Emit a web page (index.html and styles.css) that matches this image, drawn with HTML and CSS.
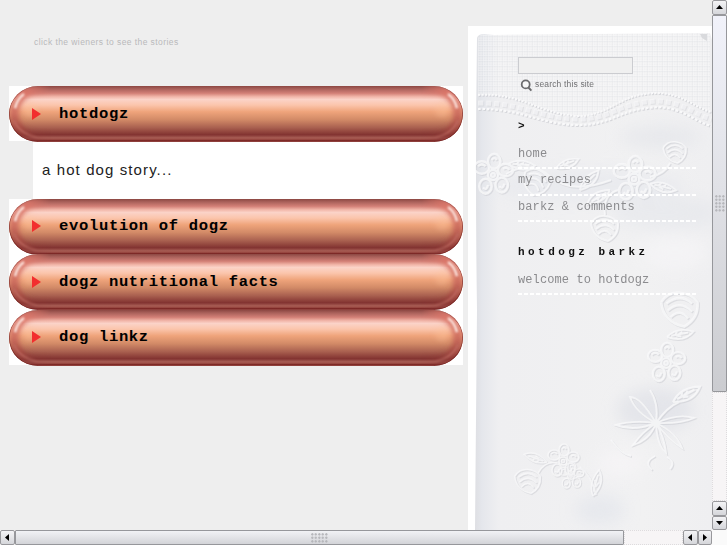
FILE: index.html
```html
<!DOCTYPE html>
<html>
<head>
    <meta charset="utf-8">
    <title>hotdogz</title>
    <link rel="stylesheet" href="styles.css">
</head>
<body>
    <!-- shared sausage artwork -->
    <svg class="defs" width="0" height="0">
        <defs>
            <linearGradient id="skin" x1="0" y1="0" x2="0" y2="1">
                <stop offset="0" stop-color="#8c4742"/>
                <stop offset=".05" stop-color="#a9605a"/>
                <stop offset=".13" stop-color="#d38077"/>
                <stop offset=".19" stop-color="#f1b5a8"/>
                <stop offset=".24" stop-color="#fbd3c8"/>
                <stop offset=".34" stop-color="#fbc5ac"/>
                <stop offset=".46" stop-color="#efa47b"/>
                <stop offset=".6" stop-color="#d28a67"/>
                <stop offset=".74" stop-color="#aa6150"/>
                <stop offset=".87" stop-color="#823331"/>
                <stop offset=".92" stop-color="#a35850"/>
                <stop offset=".95" stop-color="#a2534b"/>
                <stop offset=".97" stop-color="#7a2523"/>
                <stop offset="1" stop-color="#984b46"/>
            </linearGradient>
            <linearGradient id="rim" x1="0" y1="0" x2="0" y2="1">
                <stop offset="0" stop-color="#dc7669"/>
                <stop offset=".45" stop-color="#d27263"/>
                <stop offset=".75" stop-color="#a94d44"/>
                <stop offset="1" stop-color="#843230"/>
            </linearGradient>
            <linearGradient id="edge" x1="0" y1="0" x2="0" y2="1">
                <stop offset="0" stop-color="#b9685f"/>
                <stop offset="1" stop-color="#701b19"/>
            </linearGradient>
            <linearGradient id="fade" gradientUnits="userSpaceOnUse" x1="14" y1="0" x2="42" y2="0">
                <stop offset="0" stop-color="#fff"/>
                <stop offset="1" stop-color="#000"/>
            </linearGradient>
            <mask id="capmask" maskUnits="userSpaceOnUse" x="-2" y="-2" width="52" height="60">
                <rect x="-2" y="-2" width="52" height="60" fill="url(#fade)"/>
            </mask>
            <clipPath id="body"><rect width="454" height="55.4" rx="29" ry="27.7"/></clipPath>
            <filter id="soft" filterUnits="userSpaceOnUse" x="-20" y="-20" width="100" height="96"><feGaussianBlur stdDeviation="2.4"/></filter>
            <filter id="fine" filterUnits="userSpaceOnUse" x="-20" y="-20" width="100" height="96"><feGaussianBlur stdDeviation=".9"/></filter>
            <g id="cap">
                <g mask="url(#capmask)">
                    <path d="M60 3H32C16 3 5 14 5 28S16 51 32 52H60" fill="none" stroke="url(#rim)" stroke-width="9.5" filter="url(#soft)"/>
                    <ellipse cx="22" cy="24" rx="7" ry="7" fill="#ffc49d" opacity=".45" filter="url(#soft)"/>
                    <path d="M6 22Q8 13 15 8" fill="none" stroke="#ffece6" stroke-width="2.4" filter="url(#fine)"/>
                    <path d="M5 34Q10 47 28 51L44 51.4" fill="none" stroke="#c27268" stroke-width="1.4" filter="url(#fine)"/>
                    <path d="M29 .3A28.7 27.4 0 0 0 29 55.1" fill="none" stroke="url(#edge)" stroke-width="1.1"/>
                </g>
            </g>
            <symbol id="wiener" viewBox="0 0 454 55.4" preserveAspectRatio="none">
                <g clip-path="url(#body)">
                    <rect width="454" height="55.4" fill="url(#skin)"/>
                    <use href="#cap"/>
                    <use href="#cap" transform="translate(454 0) scale(-1 1)"/>
                </g>
            </symbol>
        </defs>
    </svg>

    <div class="window">
        <div class="page">
            <div class="main">
                <p class="hint">click the wieners to see the stories</p>
                <div class="wiener">
                    <svg class="wiener-bg"><use href="#wiener"/></svg>
                    <span class="arrow"></span><h2>hotdogz</h2>
                </div>
                <div class="story">a hot dog story...</div>
                <div class="wiener">
                    <svg class="wiener-bg"><use href="#wiener"/></svg>
                    <span class="arrow"></span><h2>evolution of dogz</h2>
                </div>
                <div class="wiener">
                    <svg class="wiener-bg"><use href="#wiener"/></svg>
                    <span class="arrow"></span><h2>dogz nutritional facts</h2>
                </div>
                <div class="wiener">
                    <svg class="wiener-bg"><use href="#wiener"/></svg>
                    <span class="arrow"></span><h2>dog linkz</h2>
                </div>
            </div>

            <div class="sidebar">
                <svg class="cloth" viewBox="468 26 244 504" preserveAspectRatio="none">
                    <defs>
                        <linearGradient id="fold" x1="0" x2="1">
                            <stop offset="0" stop-color="#dedfe3"/>
                            <stop offset=".03" stop-color="#e5e7ec"/>
                            <stop offset=".1" stop-color="#efeff1"/>
                            <stop offset=".7" stop-color="#f1f1f2"/>
                            <stop offset="1" stop-color="#efeff1"/>
                        </linearGradient>
                        <clipPath id="sheet"><path d="M476 30H712V530H475z"/></clipPath>
                        <pattern id="linen" width="5" height="5" patternUnits="userSpaceOnUse">
                            <path d="M0 .5H5M0 3H5M1 0V5M3.5 0V5" stroke="#fff" stroke-width=".8" opacity=".4"/>
                            <path d="M0 1.7H5M2.3 0V5" stroke="#dcdde2" stroke-width=".6" opacity=".5"/>
                        </pattern>
                        <filter id="haze" x="-50%" y="-50%" width="200%" height="200%"><feGaussianBlur stdDeviation="8"/></filter>
                        <filter id="stitch" x="-10%" y="-10%" width="120%" height="120%">
                            <feGaussianBlur stdDeviation=".4"/>
                            <feDropShadow dx="1" dy="1" stdDeviation=".7" flood-color="#c4c6cc" flood-opacity=".6"/>
                        </filter>
                        <g id="bloom">
                            <circle r="4"/><circle r="1.5"/>
                            <ellipse cx="-9" cy="-6" rx="6" ry="5"/><ellipse cx="1" cy="-11" rx="5" ry="6"/>
                            <ellipse cx="10" cy="-4" rx="6" ry="5"/><ellipse cx="7" cy="8" rx="5" ry="6"/>
                            <ellipse cx="-6" cy="9" rx="5" ry="6"/>
                            <path d="M-12-7q3-3 6 0M-1-12q2-3 4 0M8-5q3-2 5 1M5 9q3 3 4-2M-8 10q3 3 4-2"/>
                        </g>
                        <g id="leaf"><path d="M0 0Q8-12 25-10Q18 3 0 0M4-2L20-8M8-4l1-4M12-5l2-3M9-3l5 0"/></g>
                        <g id="bud"><path d="M-14-5Q-9-13 0-12T13-5Q14 7 3 13Q-12 10-14-5M-10-4Q0-12 9-4M-9 1Q0-7 9 2M-7 6Q0-1 6 7"/></g>
                    </defs>
                    <path d="M477 38Q478 34 484 34L494 35L710 33L712 40V530H475L477 310Q475 170 477 38" fill="url(#fold)"/>
                    <path d="M478 38Q480 34 486 35L710 33V112Q675 91 650 93C620 94 607 114 577 117C538 120 526 96 478 95Z" fill="url(#linen)"/>
                    <path d="M700 34h7v7l-5-3z" fill="#d9dadd"/>
                    <g filter="url(#haze)" opacity=".6">
                        <ellipse cx="660" cy="137" rx="40" ry="12" fill="#e2e4e9"/>
                        <ellipse cx="590" cy="186" rx="95" ry="16" fill="#e5e7ed"/>
                        <ellipse cx="667" cy="213" rx="55" ry="17" fill="#e4e6eb"/>
                        <ellipse cx="675" cy="252" rx="33" ry="18" fill="#f7f6f8"/>
                        <ellipse cx="655" cy="410" rx="38" ry="22" fill="#dcdee5"/>
                        <ellipse cx="620" cy="463" rx="24" ry="14" fill="#f8f6f8"/>
                        <ellipse cx="600" cy="510" rx="25" ry="15" fill="#e1e4eb"/>
                    </g>
                    <g clip-path="url(#sheet)">
                    <g fill="none" stroke="#f9f9fa" filter="url(#stitch)">
                        <g>
                            <path d="M478 95C520 92 537 113 577 116C612 116 618 92 660 93C684 95 694 107 711 112" stroke-width="2" stroke-dasharray="2 1.4"/>
                            <path d="M478 103C520 102 539 118 577 119C614 119 618 101 660 101C684 103 694 114 711 119" stroke-width="5" stroke-dasharray="5 3" opacity=".6"/>
                            <path d="M478 109C520 108 539 124 577 125C614 125 618 108 660 107C684 109 694 121 711 126" stroke-width="2.2" stroke-dasharray="2.5 1.8"/>
                        </g>
                        <g stroke-width="1.9" opacity=".8">
                            <use href="#bloom" transform="translate(493 175) scale(1.25)"/>
                            <use href="#bud" transform="translate(536 182) rotate(25)"/>
                            <use href="#leaf" transform="translate(556 168) scale(.9)"/>
                            <use href="#leaf" transform="translate(508 164) rotate(25)"/>
                            <use href="#leaf" transform="translate(580 190) rotate(-25)"/>
                            <use href="#bloom" transform="translate(634 179) scale(1.35)"/>
                            <use href="#leaf" transform="translate(650 184) rotate(35)"/>
                            <use href="#leaf" transform="translate(610 190) rotate(170)"/>
                            <use href="#bud" transform="translate(605 228)"/>
                            <use href="#bud" transform="translate(675 152) scale(.85)"/>
                            <path d="M506 174q25-15 45 3t60 3M605 215q-3-20 13-25M650 177q15-3 20-14"/>
                            <use href="#bud" transform="translate(680 309) scale(1.35)"/>
                            <use href="#leaf" transform="translate(667 337) rotate(10)"/>
                            <use href="#bloom" transform="translate(666 363) scale(1.2)"/>
                            <use href="#leaf" transform="translate(673 402) rotate(-8) scale(1.15)"/>
                            <path d="M656 423Q641 397 630 397Q636 413 656 423Q632 420 616 425Q634 432 656 423Q642 432 633 445Q650 440 656 423Q657 445 666 453Q664 436 656 423Q669 440 682 448Q677 433 656 423Q681 424 694 418Q678 413 656 423Q667 407 679 402M656 423Q659 403 650 390"/>
                            <path d="M611 440q11 15 20 16M655 456q-12 6-3 14M667 457q9 5 3 12"/>
                        </g>
                        <g stroke-width="1.6" opacity=".75">
                            <use href="#bloom" transform="translate(563 461)"/>
                            <use href="#bloom" transform="translate(571 476) scale(.8)"/>
                            <use href="#leaf" transform="translate(547 462) rotate(220) scale(.9)"/>
                            <use href="#bud" transform="translate(528 481) scale(.95)"/>
                            <use href="#leaf" transform="translate(593 496) rotate(-55)"/>
                            <path d="M538 473q7-13 19-10M580 467q12 9 16 28"/>
                        </g>
                    </g>
                    </g>
                </svg>
                <div class="sidebar-content">
                    <input class="search-field" type="text">
                    <div class="search-row">
                        <svg width="13" height="13" viewBox="0 0 13 13"><circle cx="5.7" cy="5.4" r="4" fill="#f8f8f8" stroke="#6c6c6e" stroke-width="1.8"/><path d="M8.2 8.2L11.4 11.6" stroke="#6c6c6e" stroke-width="2"/></svg>
                        <span>search this site</span>
                    </div>
                    <h3 class="more">&gt;</h3>
                    <ul>
                        <li>home</li>
                        <li>my recipes</li>
                        <li>barkz &amp; comments</li>
                    </ul>
                    <h3 class="barkz">hotdogz barkz</h3>
                    <ul>
                        <li>welcome to hotdogz</li>
                    </ul>
                </div>
            </div>
        </div>

        <div class="scroll vertical">
            <div class="btn"><svg viewBox="0 0 7 4"><path d="M0 4L3.5 0L7 4z"/></svg></div>
            <div class="thumb"><span class="grip"></span></div>
            <div class="track"></div>
            <div class="btn"><svg viewBox="0 0 7 4"><path d="M0 4L3.5 0L7 4z"/></svg></div>
            <div class="btn"><svg viewBox="0 0 7 4"><path d="M0 0L3.5 4L7 0z"/></svg></div>
        </div>
        <div class="scroll horizontal">
            <div class="btn"><svg viewBox="0 0 4 7"><path d="M4 0L0 3.5L4 7z"/></svg></div>
            <div class="thumb"><span class="grip"></span></div>
            <div class="track"></div>
            <div class="btn"><svg viewBox="0 0 4 7"><path d="M4 0L0 3.5L4 7z"/></svg></div>
            <div class="btn"><svg viewBox="0 0 4 7"><path d="M0 0L4 3.5L0 7z"/></svg></div>
        </div>
    </div>
</body>
</html>
```
FILE: styles.css
```css
* {
    box-sizing: border-box;
}
body {
    margin: 0;
    background: #fafafa;
    overflow: hidden;
    font-family: "Liberation Sans", Arial, sans-serif;
}
.defs {
    position: absolute;
}
.window {
    display: grid;
    grid-template-columns: 712px 15px;
    grid-template-rows: 530px 15px;
    width: 727px;
    height: 545px;
}
.page {
    display: flex;
    gap: 5px;
    padding-left: 9px;
    background: #eee;
    overflow: hidden;
}
.main {
    width: 454px;
}
.hint {
    margin: 0;
    padding: 36px 0 0 25px;
    height: 86px;
    font-size: 8.5px;
    line-height: 12px;
    letter-spacing: 0.42px;
    color: #b9b9bb;
}

/* sausage rows */
.wiener {
    position: relative;
    display: flex;
    align-items: center;
    height: 55.4px;
    padding-left: 23px;
    background: #fff;
}
.wiener-bg {
    position: absolute;
    left: 0;
    top: 0;
    width: 100%;
    height: 56px;
}
.arrow {
    position: relative;
    border-left: 9.5px solid #f22e2e;
    border-top: 6.5px solid transparent;
    border-bottom: 6.5px solid transparent;
}
.wiener h2 {
    position: relative;
    margin: 0 0 0 18px;
    font: bold 15.5px/20px "Liberation Mono", monospace;
    letter-spacing: 0.68px;
    color: #000;
}
.story {
    height: 57.4px;
    margin-left: 24px;
    padding: 18px 0 0 9px;
    background: #fff;
    font-size: 15px;
    line-height: 22px;
    letter-spacing: 1.1px;
    color: #222;
}

/* sidebar */
.sidebar {
    position: relative;
    width: 244px;
    height: 504px;
    margin-top: 26px;
    background: #fff;
}
.cloth {
    position: absolute;
    left: 0;
    top: 0;
    width: 100%;
    height: 100%;
}
.sidebar-content {
    position: relative;
    padding: 31px 15px 0 50px;
    font-family: "Liberation Mono", monospace;
}
.search-field {
    display: block;
    width: 115px;
    height: 17px;
    padding: 0;
    border: 1px solid #cbccd0;
    background: #f0f0f0;
}
.search-row {
    display: flex;
    align-items: center;
    gap: 2px;
    height: 15px;
    margin-top: 2px;
    padding-left: 2px;
    font: 8.5px/12px "Liberation Sans", Arial, sans-serif;
    color: #717173;
}
.search-row svg {
    margin-top: 3px;
}
.search-row span {
    letter-spacing: 0.16px;
}
.sidebar h3 {
    margin: 0;
    font-size: 11px;
    line-height: 16px;
    letter-spacing: 3.45px;
    color: #111;
}
.sidebar .more {
    margin-top: 27px;
}
.sidebar .barkz {
    margin-top: 22px;
}
.sidebar ul {
    margin: 9px 0 0;
    padding: 0;
    list-style: none;
}
.sidebar li {
    height: 26.3px;
    padding-top: 3px;
    font-size: 12px;
    line-height: 16px;
    letter-spacing: 0.1px;
    color: #8b8b8e;
    background: repeating-linear-gradient(90deg, #fff 0 4px, transparent 4px 6px) 0 100% / 100% 2px no-repeat;
}

/* scrollbars */
.scroll {
    display: flex;
    background: #f7f5f6;
}
.vertical {
    flex-direction: column;
}
.horizontal {
    width: 712px;
}
.btn {
    display: flex;
    align-items: center;
    justify-content: center;
    flex: none;
    width: 14.5px;
    height: 14.5px;
    border: 1px solid #98989c;
    border-radius: 2px;
    background: linear-gradient(#f4f4f6, #d5d6da);
}
.btn svg {
    width: 7px;
    height: 4px;
}
.horizontal .btn svg {
    width: 4px;
    height: 7px;
}
.thumb {
    display: flex;
    align-items: center;
    justify-content: center;
    flex: none;
    border: 1px solid #96979b;
    border-radius: 1px;
}
.vertical .thumb {
    height: 377px;
    background: linear-gradient(#f1f2fa, #e1e2e7 45%, #cbccd0);
}
.horizontal .thumb {
    width: 609px;
    background: linear-gradient(#f1f2f5, #d3d4d8);
}
.track {
    flex: 1;
    border: 1px dotted #dedcde;
}
.grip {
    width: 10px;
    height: 17px;
    background: radial-gradient(circle at 1.3px 1.3px, #b4b5b9 1px, transparent 1.3px) 0 0 / 3.5px 3.5px;
}
.horizontal .grip {
    width: 17px;
    height: 10px;
}
```
